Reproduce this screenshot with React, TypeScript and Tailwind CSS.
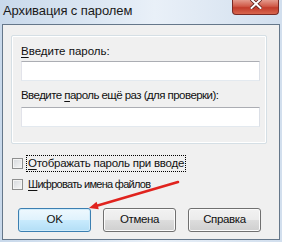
import React from "react";

const font = { fontFamily: '"Liberation Sans", Arial, sans-serif' };

function Checkbox({ label, accel, focused, track }: { label: string; accel: string; focused?: boolean; track: string }) {
  return (
    <div className="flex items-center h-[17px] ml-[9px]">
      <div className="w-[11px] h-[11px] border border-[#8e8f8f] bg-gradient-to-br from-[#d5d8dc] to-[#f7f7f7] shadow-[inset_0_0_0_1px_#f4f4f4]" />
      <div
        className={
          "ml-[3px] h-[17px] flex items-center px-[1px] text-[#111] " +
          track +
          " " +
          (focused ? "border border-dotted border-black" : "border border-transparent")
        }
      >
        <span className="underline underline-offset-2">{accel}</span>
        <span>{label}</span>
      </div>
    </div>
  );
}

function Button({ children, def }: { children: React.ReactNode; def?: boolean }) {
  return (
    <div
      className={
        "w-[73px] h-[24px] rounded-[3px] border flex items-center justify-center text-[11.5px] tracking-[-0.35px] text-[#111] " +
        (def
          ? "border-[#3c7fb1] bg-[linear-gradient(#eef8fe_0%,#dff2fc_50%,#c9ebfd_50%,#b3def6_100%)] shadow-[inset_0_0_0_1px_#d0ecfb]"
          : "border-[#707070] bg-[linear-gradient(#f2f2f2_0%,#ebebeb_50%,#dddddd_50%,#cfcfcf_100%)] shadow-[inset_0_0_0_1px_#fbfbfb]")
      }
    >
      {children}
    </div>
  );
}

export default function App() {
  return (
    <div
      style={font}
      className="relative w-[282px] h-[242px] overflow-hidden flex flex-col bg-[linear-gradient(90deg,#c9d9eb_0%,#dce7f3_35%,#e9f0f8_55%,#d2dfee_100%)]"
    >
      <div className="h-[24px] flex items-start shrink-0">
        <div className="pl-[3px] pt-[3px] text-[13px] leading-[15px] tracking-[-0.1px] text-[#1a1a1a]">Архивация с паролем</div>
        <div className="ml-auto mr-[3px] w-[47px] h-[15px] rounded-b-[4px] border border-t-0 border-[#7a2a24] bg-[linear-gradient(#e49a8c_0%,#d05a48_45%,#c23c2b_55%,#d8654e_100%)] flex items-start justify-center">
          <svg width="12" height="10" viewBox="0 0 12 10" className="-mt-[1px]">
            <path d="M1.5 0.5 L10.5 9 M10.5 0.5 L1.5 9" stroke="#5a1d18" strokeWidth="3.6" strokeLinecap="square" />
            <path d="M1.5 0.5 L10.5 9 M10.5 0.5 L1.5 9" stroke="#ffffff" strokeWidth="2" strokeLinecap="square" />
          </svg>
        </div>
      </div>
      <div className="flex-1 mx-[2px] mb-[2px] border border-[#65778a] bg-[#f0f0f0] flex flex-col">
        <div className="mt-[10px] ml-[8px] w-[256px] h-[109px] border border-[#d5dfe5] rounded-[2px] shadow-[inset_0_0_0_1px_#ffffff] pl-[9px] pt-[8px]">
          <div className="text-[11.5px] leading-[15px] text-[#111]">
            <span className="underline underline-offset-2">В</span>ведите пароль:
          </div>
          <div className="mt-[2px] w-[239px] h-[20px] bg-white border border-[#abadb3] border-l-[#e2e3ea] border-r-[#dbdfe6] border-b-[#e3e9ef]" />
          <div className="mt-[7px] text-[11.5px] leading-[15px] tracking-[-0.55px] text-[#111]">
            Введите <span className="underline underline-offset-2">п</span>ароль ещё раз (для проверки):
          </div>
          <div className="mt-[4px] w-[239px] h-[20px] bg-white border border-[#abadb3] border-l-[#e2e3ea] border-r-[#dbdfe6] border-b-[#e3e9ef]" />
        </div>
        <div className="mt-[11px]">
          <Checkbox accel="О" label="тображать пароль при вводе" focused track="text-[11.5px] tracking-[-0.25px]" />
        </div>
        <div className="mt-[4px]">
          <Checkbox accel="Ш" label="ифровать имена файлов" track="text-[11px] tracking-[-0.7px]" />
        </div>
        <div className="mt-[15px] ml-[15px] flex gap-[12px]">
          <Button def>OK</Button>
          <Button>Отмена</Button>
          <Button>Справка</Button>
        </div>
      </div>
      <svg className="absolute left-0 top-0 pointer-events-none" width="282" height="242" viewBox="0 0 282 242">
        <line x1="178" y1="182" x2="96" y2="206" stroke="#e0231e" strokeWidth="2.6" strokeLinecap="round" />
        <polygon points="89,208 98.8,209.2 96.6,201.8" fill="#e0231e" />
      </svg>
    </div>
  );
}
